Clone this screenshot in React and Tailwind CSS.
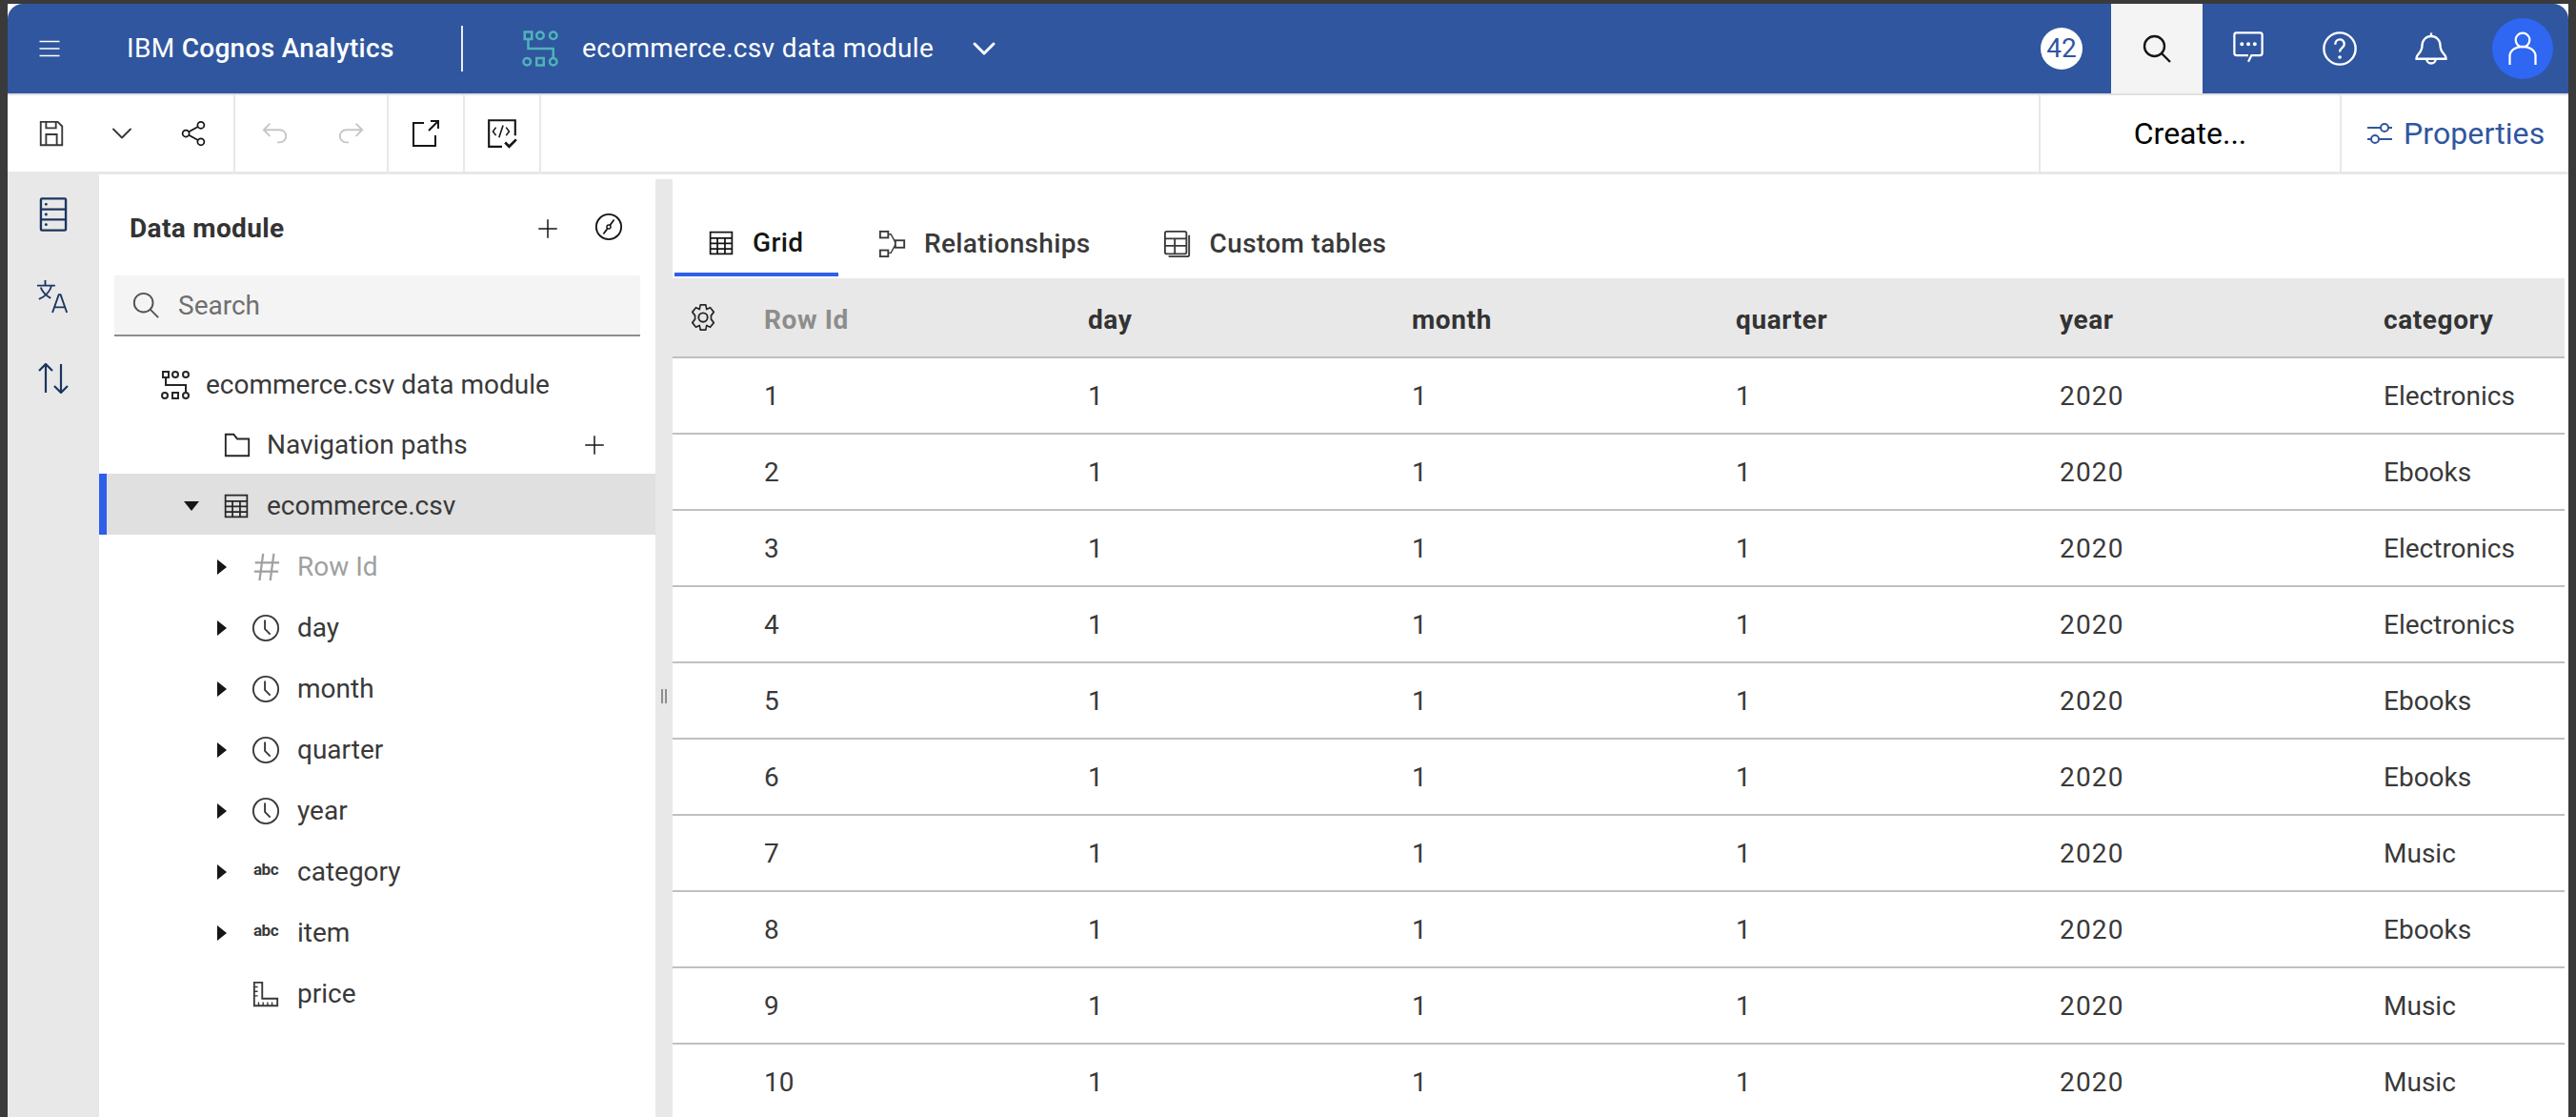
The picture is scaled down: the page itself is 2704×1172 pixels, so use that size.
import { ChevronDown } from "lucide-react"

const columns = ["Row Id", "day", "month", "quarter", "year", "category"]
const categories = ["Electronics", "Ebooks", "Electronics", "Electronics", "Ebooks", "Ebooks", "Music", "Ebooks", "Music", "Music"]
const fields = [
  { name: "Row Id", icon: "hash", muted: true },
  { name: "day", icon: "clock" },
  { name: "month", icon: "clock" },
  { name: "quarter", icon: "clock" },
  { name: "year", icon: "clock" },
  { name: "category", icon: "abc" },
  { name: "item", icon: "abc" },
  { name: "price", icon: "ruler", noCaret: true },
]

function Svg({ size = 32, className = "", children }) {
  return (
    <svg width={size} height={size} viewBox="0 0 32 32" fill="none" stroke="currentColor" strokeWidth="2" className={`shrink-0 ${className}`}>
      {children}
    </svg>
  )
}

function ModuleIcon({ size = 34, className }) {
  return (
    <Svg size={size} className={className}>
      <rect x="3" y="2" width="6" height="6" />
      <circle cx="16" cy="5" r="3" />
      <circle cx="27" cy="5" r="3" />
      <path d="M6 8v8h21v8" />
      <circle cx="5" cy="27" r="3" />
      <rect x="13" y="24" width="6" height="6" />
      <circle cx="27" cy="27" r="3" />
    </Svg>
  )
}

function TableIcon({ size = 28, className }) {
  return (
    <Svg size={size} className={className}>
      <rect x="3" y="3" width="26" height="26" />
      <path d="M3 10h26M3 16.5h26M3 23h26M11.5 10v19M20.5 10v19" />
    </Svg>
  )
}

function SearchIcon({ size = 32, className, weight = 2 }) {
  return (
    <svg width={size} height={size} viewBox="0 0 32 32" fill="none" stroke="currentColor" strokeWidth={weight} className={`shrink-0 ${className ?? ""}`}>
      <circle cx="13.5" cy="13.5" r="10.5" />
      <path d="M21 21l9 9" />
    </svg>
  )
}

function PlusIcon({ className }) {
  return (
    <Svg size={24} className={className}>
      <path d="M16 3v26M3 16h26" />
    </Svg>
  )
}

function ClockIcon() {
  return (
    <Svg size={30}>
      <circle cx="16" cy="16" r="14" />
      <path d="M15 7v10l6 6" />
    </Svg>
  )
}

function FieldIcon({ type }) {
  if (type === "clock") return <ClockIcon />
  if (type === "hash") {
    return (
      <Svg size={30} className="text-[#a0a0a0]">
        <path d="M13 1L9 31M25 1L21 31M4 11h27M3 21h27" strokeWidth="2.400" />
      </Svg>
    )
  }
  if (type === "abc") return <span className="w-[30px] text-center text-[17px] font-bold leading-none text-[#393939] tracking-[-0.5px] -mt-1">abc</span>
  return (
    <Svg size={30}>
      <path d="M3 3h9v18h17v8H3z" />
      <path d="M3 8h4M3 13h4M3 18h4M8 29v-4M13 29v-4M18 29v-4M23 29v-4" strokeWidth="1.5" />
    </Svg>
  )
}

function Caret({ down }) {
  if (down) return <span className="w-0 h-0 border-x-[8px] border-x-transparent border-t-[10px] border-t-[#161616]" />
  return <span className="w-0 h-0 border-y-[8px] border-y-transparent border-l-[10px] border-l-[#161616]" />
}

function AppHeader() {
  return (
    <header className="h-[94px] bg-[#30569f] rounded-t-[16px] flex items-stretch text-white">
      <div className="w-[125px] flex items-center pl-[32px]">
        <Svg size={24}><path d="M2 6h28M2 16h28M2 26h28" /></Svg>
      </div>
      <div className="w-[228px] flex items-center whitespace-nowrap text-[28px] tracking-[0.3px]">
        IBM&nbsp;<span className="font-medium">Cognos Analytics</span>
      </div>
      <div className="w-[125px] flex items-center justify-end">
        <div className="h-[48px] w-[2px] bg-white/90" />
      </div>
      <div className="flex items-center pl-[61px]">
        <ModuleIcon size={40} className="text-[#4fb3b8]" />
        <span className="ml-[24px] text-[28px] tracking-[0.33px] whitespace-nowrap text-white">ecommerce.csv data module</span>
        <ChevronDown size={40} strokeWidth={1.8} className="ml-[33px]" />
      </div>
      <div className="ml-auto flex items-stretch">
        <div className="flex items-center pr-[30px]">
          <span className="w-[44px] h-[44px] rounded-full bg-white text-[#30569f] text-[28px] flex items-center justify-center">42</span>
        </div>
        <div className="w-[96px] bg-[#f4f4f4] text-[#161616] flex items-center justify-center">
          <SearchIcon size={32} weight={2.400} />
        </div>
        <div className="w-[96px] flex items-center justify-center">
          <Svg size={36} className="-mt-[4px]">
            <path d="M16 24H5a2 2 0 0 1-2-2V5a2 2 0 0 1 2-2h22a2 2 0 0 1 2 2v17a2 2 0 0 1-2 2h-8l-3 6" />
            <path d="M10 13.500h.1M16 13.500h.1M22 13.500h.1" strokeWidth="3.500" strokeLinecap="round" />
          </Svg>
        </div>
        <div className="w-[96px] flex items-center justify-center">
          <Svg size={38}>
            <circle cx="16" cy="16" r="14" />
            <path d="M12 12.500c0-6 8-6 8-.5 0 3.500-4 3-4 7" />
            <path d="M16 23.500h.1" strokeWidth="3" strokeLinecap="round" />
          </Svg>
        </div>
        <div className="w-[96px] flex items-center justify-center">
          <Svg size={38}>
            <path d="M16 2v3M8 13a8 8 0 0 1 16 0c0 7 5 8 5 11v1H3v-1c0-3 5-4 5-11zM12 25a4 4 0 0 0 8 0" />
          </Svg>
        </div>
        <div className="w-[96px] pl-[16px] flex items-center">
          <span className="w-[64px] h-[64px] rounded-full bg-[#2f66f2] flex items-center justify-center">
            <Svg size={36}>
              <circle cx="16" cy="8" r="6.500" />
              <path d="M4 31v-8a12 9 0 0 1 24 0v8" />
            </Svg>
          </span>
        </div>
      </div>
    </header>
  )
}

function Toolbar() {
  return (
    <div className="h-[85px] bg-white border-t-[2px] border-t-[#e0e0e0] border-b-[3px] border-b-[#e8e8e8] flex items-stretch text-[#161616]">
      <div className="w-[239px] border-r-[2px] border-[#e8e8e8] flex items-center">
        <Svg size={30} className="ml-[31px] text-[#393939]">
          <path d="M4 3h19l5 5v21H4zM10 3v7h11V3M10 29V17h12v12" />
        </Svg>
        <ChevronDown size={36} strokeWidth={1.300} className="ml-[41px] text-[#393939]" />
        <Svg size={28} className="ml-[43px]">
          <circle cx="7" cy="16" r="4" />
          <circle cx="25" cy="6" r="4" />
          <circle cx="25" cy="26" r="4" />
          <path d="M10.500 14l11-6M10.500 18l11 6" />
        </Svg>
      </div>
      <div className="w-[161px] border-r-[2px] border-[#e8e8e8] flex items-center text-[#c6c6c6]">
        <Svg size={30} className="ml-[27px]">
          <path d="M10 5L3 12l7 7M3 12h18a7 7 0 0 1 0 14h-3" />
        </Svg>
        <Svg size={30} className="ml-[49px]">
          <path d="M22 5l7 7-7 7M29 12H11a7 7 0 0 0 0 14h3" />
        </Svg>
      </div>
      <div className="w-[80px] border-r-[2px] border-[#e8e8e8] flex items-center justify-center">
        <Svg size={32}>
          <path d="M14 5H3v24h23V18M19 13L29 3M21 3h8v8" />
        </Svg>
      </div>
      <div className="w-[80px] border-r-[2px] border-[#e8e8e8] flex items-center justify-center">
        <Svg size={34}>
          <path d="M16 29H3V3h26v15" />
          <path d="M10 10l-3 4 3 4M20 10l3 4-3 4M17 8l-4 12" strokeWidth="1.500" />
          <path d="M19 25l4 4 7-7" strokeWidth="2.500" />
        </Svg>
      </div>
      <div className="ml-auto w-[318px] border-x-[2px] border-[#e8e8e8] flex items-center justify-center text-[32px] text-black">
        Create...
      </div>
      <div className="w-[238px] flex items-center pl-[24px] text-[#30569f] text-[32px]">
        <Svg size={32}>
          <path d="M3 10h14M25 10h4M3 22h4M15 22h14" />
          <circle cx="21" cy="10" r="4" />
          <circle cx="11" cy="22" r="4" />
        </Svg>
        <span className="ml-[9px] tracking-[0.1px]">Properties</span>
      </div>
    </div>
  )
}

function Rail() {
  return (
    <aside className="w-[96px] shrink-0 bg-[#e8e8e8] flex flex-col items-center pt-[23px] text-[#1c3560]">
      <Svg size={38}>
        <rect x="5" y="2" width="22" height="28" rx="1" />
        <path d="M5 11.500h22M5 20.500h22" />
        <path d="M9.500 7h.1M9.500 16h.1M9.500 25h.1" strokeLinecap="round" strokeWidth="2.400" />
      </Svg>
      <div className="mt-[49px]">
        <svg width="36" height="36" viewBox="0 0 38 38" fill="none" stroke="currentColor" strokeWidth="2" className="block">
          <path d="M1 7h20M10 1v6M17 7c-2 8-7 12-14 15M5 9c2 6 6 9 11 12M18 37l7-20h2l7 20M20 31h12" />
        </svg>
      </div>
      <div className="mt-[52px]">
        <svg width="34" height="32" viewBox="0 0 34 32" fill="none" stroke="currentColor" strokeWidth="2.200" className="block">
          <path d="M9 31V1M2 8l7-7 7 7M25 1v30M18 24l7 7 7-7" />
        </svg>
      </div>
    </aside>
  )
}

function TreePanel() {
  return (
    <section className="w-[584px] shrink-0 bg-white flex flex-col text-[#393939] text-[28px]">
      <div className="h-[106px] flex items-center pl-[32px] pt-[8px]">
        <span className="font-bold text-[#333333] tracking-[0.35px]">Data module</span>
        <PlusIcon className="ml-[264px] text-[#161616]" />
        <Svg size={30} className="ml-[37px] text-[#161616] -mt-[4px]">
          <circle cx="16" cy="16" r="14" />
          <path d="M22 8l-4.500 6M14.500 18L10 24" strokeWidth="1.800" />
          <circle cx="16" cy="16" r="2.200" strokeWidth="1.500" />
        </Svg>
      </div>
      <div className="mx-[16px] h-[64px] bg-[#f4f4f4] border-b-[2px] border-[#8d8d8d] flex items-center pl-[18px] text-[#6f6f6f]">
        <SearchIcon size={30} className="text-[#525252]" />
        <span className="ml-[19px] pt-[2px]">Search</span>
      </div>
      <div className="mt-[18px] h-[62px] flex items-center pl-[64px] pt-[3px]">
        <ModuleIcon size={32} className="text-[#262626]" />
        <span className="ml-[16px]">ecommerce.csv data module</span>
      </div>
      <div className="h-[64px] flex items-center pl-[130px] pt-[3px]">
        <Svg size={30} className="text-[#262626]">
          <path d="M3 4h9l4 5h13v19H3z" />
        </Svg>
        <span className="ml-[16px]">Navigation paths</span>
        <PlusIcon className="ml-[121px] text-[#161616]" />
      </div>
      <div className="h-[64px] bg-[#e0e0e0] border-l-[8px] border-[#2f5ee9] flex items-center pl-[81px] pt-[3px]">
        <Caret down />
        <TableIcon size={28} className="ml-[25px] text-[#262626]" />
        <span className="ml-[18px]">ecommerce.csv</span>
      </div>
      {fields.map((f) => (
        <div key={f.name} className="h-[64px] flex items-center pl-[124px] pt-[3px]">
          <span className="w-[10px] flex">{!f.noCaret && <Caret />}</span>
          <span className="ml-[26px] flex justify-center"><FieldIcon type={f.icon} /></span>
          <span className={`ml-[18px] ${f.muted ? "text-[#a0a0a0]" : ""}`}>{f.name}</span>
        </div>
      ))}
    </section>
  )
}

function Splitter() {
  return (
    <div className="w-[18px] shrink-0 bg-[#e8e8e8] mt-[5px] flex justify-center gap-[2px] pt-[535px]">
      <span className="w-[2px] h-[15px] bg-[#8d8d8d]" />
      <span className="w-[2px] h-[15px] bg-[#8d8d8d]" />
    </div>
  )
}

function Tabs() {
  return (
    <div className="h-[109px] flex items-stretch pl-[2px] text-[28px] font-medium text-[#393939] tracking-[0.35px]">
      <div className="w-[172px] mb-[2px] border-b-[4px] border-[#2f5ee9] flex items-center pl-[35px] pt-[41px] text-[#161616]">
        <TableIcon size={28} />
        <span className="ml-[19px]">Grid</span>
      </div>
      <div className="flex items-center pl-[42px] pt-[36px]">
        <Svg size={30}>
          <rect x="2" y="2" width="9" height="7" />
          <rect x="2" y="23" width="9" height="7" />
          <rect x="19" y="12" width="10" height="8" />
          <path d="M11 5h3l5 9M11 26h3l5-9" strokeWidth="1.500" />
        </Svg>
        <span className="ml-[18px]">Relationships</span>
      </div>
      <div className="flex items-center pl-[76px] pt-[36px]">
        <Svg size={30}>
          <rect x="2" y="2" width="24" height="25" rx="2" />
          <path d="M2 10h24M2 18h24M13 10v17M29 6v22a2 2 0 0 1-2 2H6" />
        </Svg>
        <span className="ml-[19px]">Custom tables</span>
      </div>
    </div>
  )
}

function DataGrid() {
  return (
    <div className="text-[28px] text-[#393939]">
      <div className="h-[84px] bg-[#e8e8e8] border-b-[2px] border-[#c0c0c0] grid grid-cols-[96px_340px_340px_340px_340px_340px_1fr] items-center font-bold mr-[4px]">
        <span className="flex justify-center pr-[32px] text-[#262626]">
          <Svg size={30}>
            <circle cx="16" cy="16" r="5" />
            <path d="M13 2h6l1 5 4-2 4 5-3 4v4l3 4-4 5-4-2-1 5h-6l-1-5-4 2-4-5 3-4v-4l-3-4 4-5 4 2z" strokeWidth="1.800" strokeLinejoin="round" />
          </Svg>
        </span>
        {columns.map((c, i) => (
          <span key={c} className={`pt-[6px] tracking-[0.6px] ${i === 0 ? "text-[#8d8d8d]" : "text-[#333333]"}`}>{c}</span>
        ))}
      </div>
      {categories.map((cat, i) => (
        <div key={i} className="h-[80px] border-b-[2px] border-[#c0c0c0] grid grid-cols-[96px_340px_340px_340px_340px_340px_1fr] items-center mr-[4px] [&>span]:pt-[2px]">
          <span />
          <span>{i + 1}</span>
          <span>1</span>
          <span>1</span>
          <span>1</span>
          <span className="tracking-[1.2px]">2020</span>
          <span>{cat}</span>
        </div>
      ))}
    </div>
  )
}

export default function App() {
  return (
    <div className="w-[2704px] h-[1172px] bg-[#3a3a3a] pt-[4px] px-[8px] overflow-hidden font-['Roboto',sans-serif]">
      <div className="h-full flex flex-col bg-white">
        <AppHeader />
        <Toolbar />
        <div className="flex-1 flex min-h-0">
          <Rail />
          <TreePanel />
          <Splitter />
          <main className="flex-1 min-w-0 bg-white">
            <Tabs />
            <DataGrid />
          </main>
        </div>
      </div>
    </div>
  )
}
